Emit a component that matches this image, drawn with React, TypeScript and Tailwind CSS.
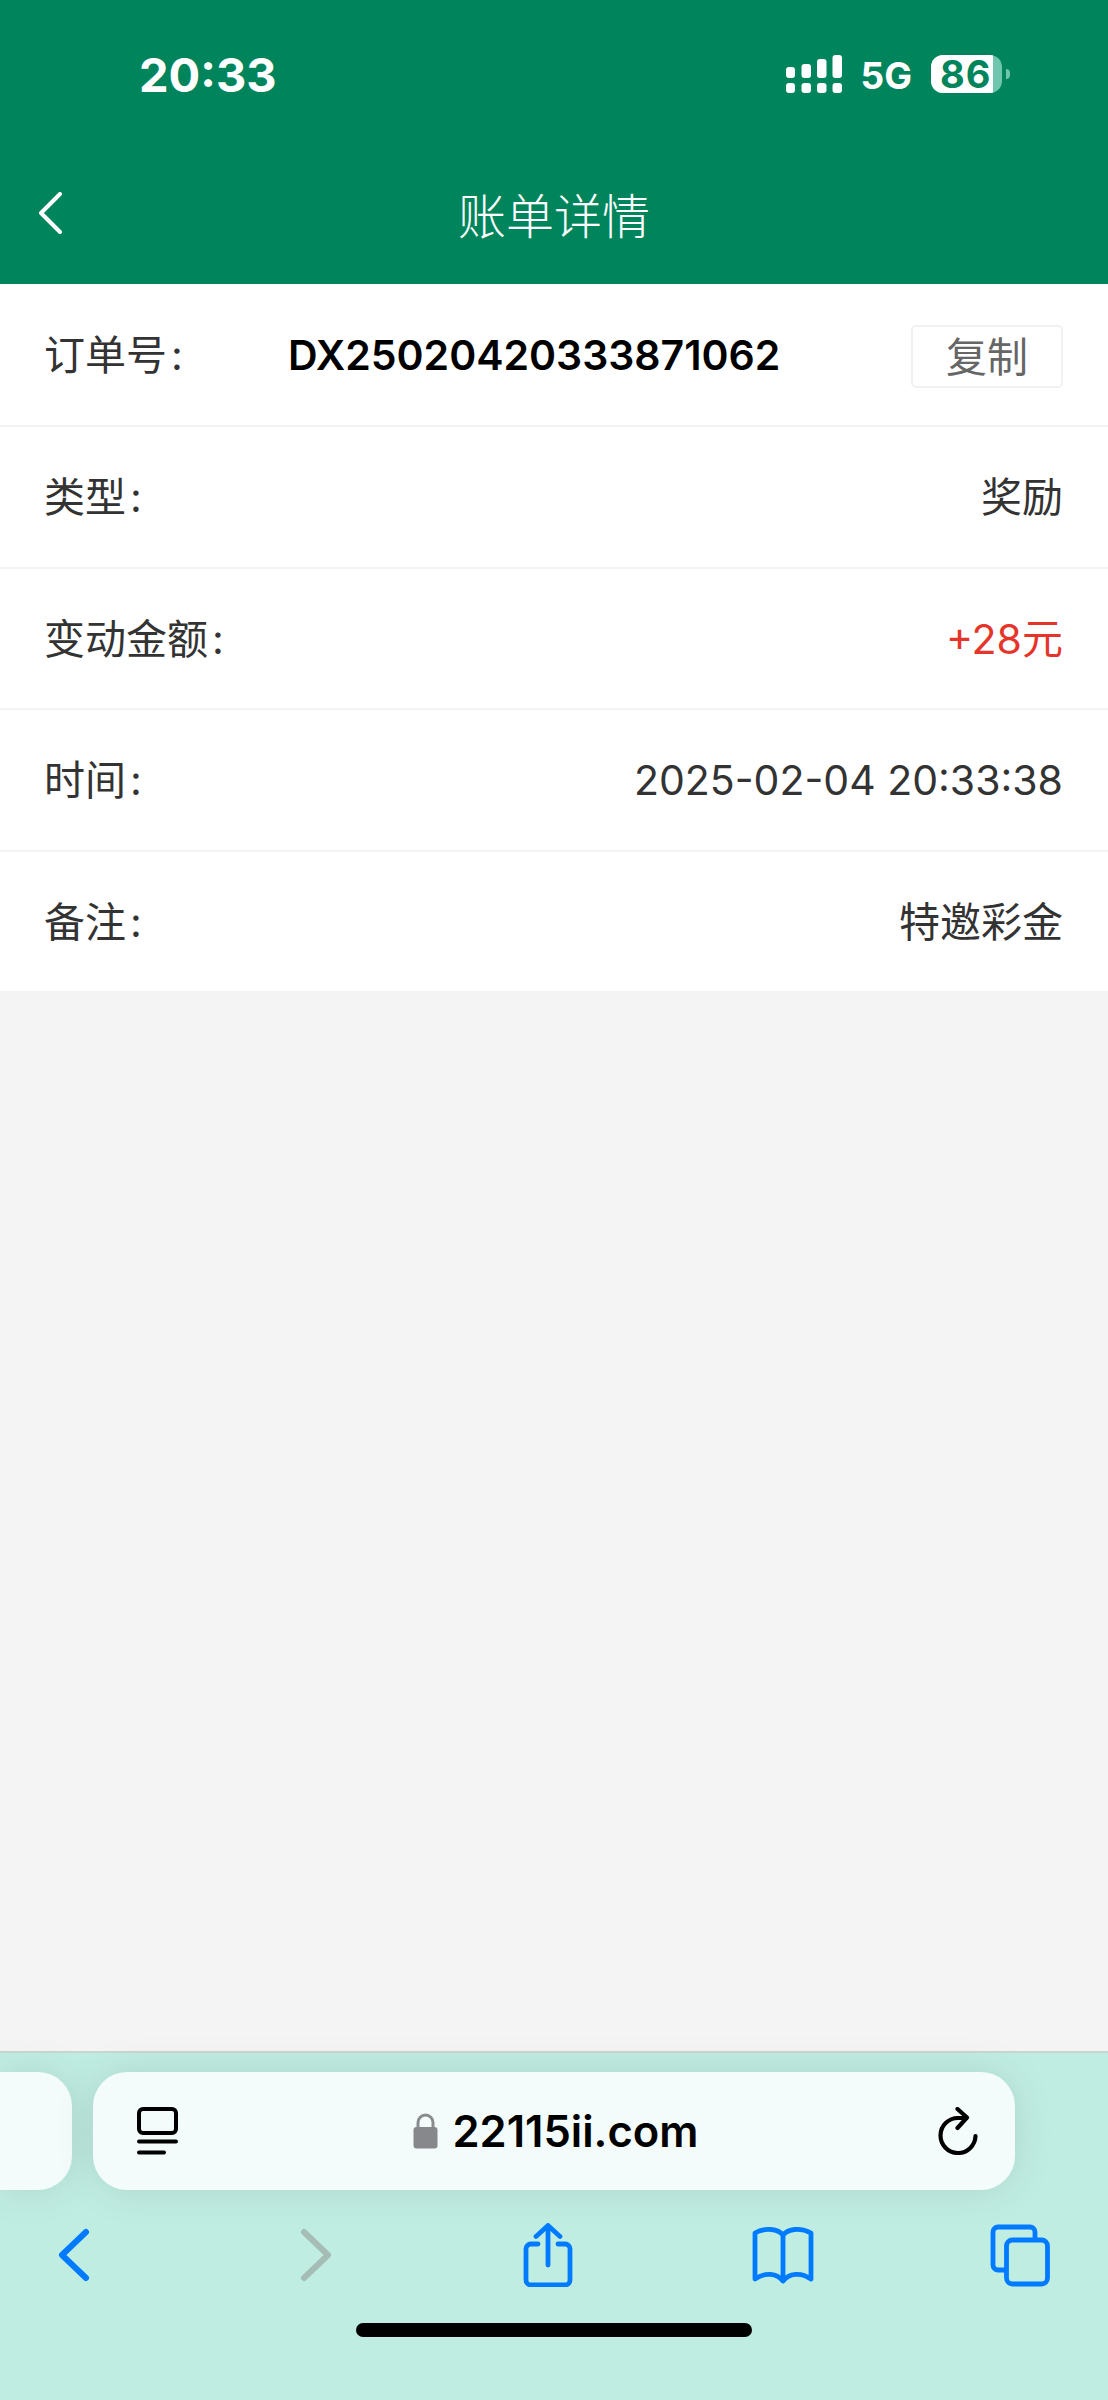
const rows = [
  { label: "类型", value: "奖励", color: "text-[#333333]" },
  { label: "变动金额", value: "+28元", color: "text-[#e5352a]" },
  { label: "时间", value: "2025-02-04 20:33:38", color: "text-[#333333]" },
  { label: "备注", value: "特邀彩金", color: "text-[#333333]" },
]

function Signal() {
  return (
    <svg width="56" height="38" viewBox="0 0 56 38" className="fill-white">
      <rect x="0" y="12" width="9" height="11" rx="3" />
      <rect x="15.5" y="9" width="9.5" height="14" rx="3" />
      <rect x="31" y="4" width="9.5" height="19" rx="3" />
      <rect x="46.5" y="0" width="9.5" height="23" rx="3" />
      <rect x="0" y="28" width="9" height="10" rx="3" />
      <rect x="15.5" y="28" width="9.5" height="10" rx="3" />
      <rect x="31" y="28" width="9.5" height="10" rx="3" />
      <rect x="46.5" y="28" width="9.5" height="10" rx="3" />
    </svg>
  )
}

function Battery() {
  return (
    <div className="relative w-[79px] h-[38px] ml-[19px]">
      <div className="w-[71px] h-[38px] rounded-[12px] bg-[#6fc5ae] overflow-hidden">
        <div className="w-[62px] h-[38px] bg-white"></div>
      </div>
      <div className="absolute left-[75px] top-[14px] w-[4px] h-[10px] rounded-r-full bg-[#6fc5ae]"></div>
      <span className="absolute left-[9px] top-0 leading-[38px] text-[38px] font-bold text-[#00845c] tracking-[1px]">
        86
      </span>
    </div>
  )
}

function PageBack() {
  return (
    <svg width="24" height="42" viewBox="0 0 24 42" fill="none" className="stroke-white">
      <path d="M22 2 L3 21 L22 40" strokeWidth="4" strokeLinecap="round" strokeLinejoin="round" />
    </svg>
  )
}

function TabIcon() {
  return (
    <svg width="41" height="48" viewBox="0 0 41 48" fill="none" className="stroke-black">
      <rect x="2" y="2" width="37" height="24" rx="4" strokeWidth="4" />
      <path d="M2 34.5 H39" strokeWidth="4" strokeLinecap="round" />
      <path d="M2 45.5 H27" strokeWidth="4" strokeLinecap="round" />
    </svg>
  )
}

function Lock() {
  return (
    <svg width="25" height="36" viewBox="0 0 25 36">
      <path d="M5 15 V9.5 a7.5 7.5 0 0 1 15 0 V15" fill="none" stroke="#8a8c90" strokeWidth="3" />
      <rect x="0.5" y="14" width="24" height="21.5" rx="3" fill="#86888c" />
    </svg>
  )
}

function Reload() {
  return (
    <svg width="40" height="48" viewBox="0 0 40 48" fill="none" className="stroke-black">
      <path
        d="M37.5 29 a17.5 17.5 0 1 1 -17.5 -18 h8"
        strokeWidth="4.2"
        strokeLinecap="round"
      />
      <path d="M19.5 2 L29 10.5 L19.5 21" strokeWidth="4.2" strokeLinecap="round" strokeLinejoin="round" />
    </svg>
  )
}

function Chevron({ right, color }: { right?: boolean; color: string }) {
  return (
    <svg width="60" height="64" viewBox="0 0 60 64" fill="none" stroke={color}>
      <path
        d={right ? "M18 9 L42 32 L18 55" : "M42 9 L18 32 L42 55"}
        strokeWidth="6"
        strokeLinecap="round"
        strokeLinejoin="round"
      />
    </svg>
  )
}

function ShareIcon() {
  return (
    <svg width="60" height="64" viewBox="0 0 60 64" fill="none" stroke="#007aff">
      <path
        d="M20 21 H13 a5 5 0 0 0 -5 5 V57 a5 5 0 0 0 5 5 H47 a5 5 0 0 0 5 -5 V26 a5 5 0 0 0 -5 -5 H40"
        strokeWidth="4.8"
        strokeLinecap="round"
      />
      <path d="M30 42 V3" strokeWidth="4.8" strokeLinecap="round" />
      <path d="M18 13.5 L30 2.5 L42 13.5" strokeWidth="4.8" strokeLinecap="round" strokeLinejoin="round" />
    </svg>
  )
}

function BookIcon() {
  return (
    <svg width="64" height="64" viewBox="0 0 64 64" fill="none" stroke="#007aff">
      <path
        d="M32 12 C27 6 15 4 4 10 V56 C14 49 26 50 32 58 C38 50 50 49 60 56 V10 C49 4 37 6 32 12 Z"
        strokeWidth="4.8"
        strokeLinejoin="round"
      />
      <path d="M32 12 V58" strokeWidth="4.8" />
    </svg>
  )
}

function CopyTabs() {
  return (
    <svg width="60" height="64" viewBox="0 0 60 64" fill="none" stroke="#007aff">
      <path
        d="M15 47 H8 a5 5 0 0 1 -5 -5 V9 a5 5 0 0 1 5 -5 H40 a5 5 0 0 1 5 5 V16"
        strokeWidth="4.8"
      />
      <rect x="16.5" y="17" width="41" height="44" rx="6" strokeWidth="4.8" />
    </svg>
  )
}

function Label({ text }: { text: string }) {
  return (
    <span>
      {text}
      <span className="ml-[4px]">:</span>
    </span>
  )
}

export default function App() {
  return (
    <div className="w-[1108px] h-[2400px] flex flex-col bg-[#f4f4f4] font-[Inter,'Noto_Sans_CJK_SC',sans-serif]">
      {/* Green header with status bar */}
      <header className="h-[284px] bg-[#00845c] text-white">
        <div className="h-[150px] flex items-start pl-[139px] pt-[52px]">
          <span className="text-[47px] leading-[46px] font-bold">20:33</span>
          <div className="ml-auto flex items-start mt-[3px] mr-[98px]">
            <Signal />
            <span className="ml-[19px] mt-[2px] text-[37px] leading-[38px] font-bold">5G</span>
            <Battery />
          </div>
        </div>
        <div className="relative h-[134px] flex justify-center pt-[37px]">
          <div className="absolute left-[38px] top-[42px]">
            <PageBack />
          </div>
          <h1 className="text-[48px] leading-[60px] font-light">账单详情</h1>
        </div>
      </header>

      {/* Detail rows */}
      <section className="bg-white text-[41px] text-[#333333]">
        <div className="h-[143px] flex items-center pl-[44px] pr-[45px] pt-[3px] border-b-2 border-[#f3f3f3]">
          <div className="w-[244px]">
            <Label text="订单号" />
          </div>
          <span className="font-semibold text-black text-[41px]">DX25020420333871062</span>
          <button className="ml-auto w-[152px] h-[63px] rounded-[5px] border-2 border-[#f1f1f1] text-[#666666]">
            复制
          </button>
        </div>
        {rows.map((row, index) => (
          <div
            key={row.label}
            className={
              index === rows.length - 1
                ? "h-[139px] flex items-center justify-between pl-[44px] pr-[45px] pt-[2px]"
                : "h-[141.6px] flex items-center justify-between pl-[44px] pr-[45px] pt-[2px] border-b-2 border-[#f3f3f3]"
            }
          >
            <Label text={row.label} />
            <span className={row.color}>{row.value}</span>
          </div>
        ))}
      </section>

      <div className="flex-1"></div>

      {/* Safari toolbar */}
      <footer className="h-[349px] bg-[#c0ede2] border-t-2 border-[#c9d6d2] flex flex-col">
        <div className="mt-[19px] flex gap-[21px]">
          <div className="w-[72px] h-[118px] rounded-r-[34px] bg-[#f3fcfa] shadow-[0_0_40px_rgba(0,0,0,0.1)]"></div>
          <div className="w-[922px] h-[118px] rounded-[34px] bg-[#f3fcfa] shadow-[0_0_40px_rgba(0,0,0,0.1)] flex items-center pl-[44px] pr-[37px]">
            <TabIcon />
            <div className="flex-1 flex items-center justify-center gap-[15px] pl-[3px] pr-[8px]">
              <Lock />
              <span className="text-[43.5px] leading-[52px] font-semibold text-black">22115ii.com</span>
            </div>
            <Reload />
          </div>
        </div>
        <nav className="mt-[33px] pl-[44px] grid grid-cols-[242px_232px_233px_239px_60px]">
          <Chevron color="#007aff" />
          <Chevron right color="#a5bdb5" />
          <ShareIcon />
          <BookIcon />
          <CopyTabs />
        </nav>
        <div className="mt-[36px] mx-auto w-[396px] h-[14px] rounded-full bg-black"></div>
      </footer>
    </div>
  )
}
